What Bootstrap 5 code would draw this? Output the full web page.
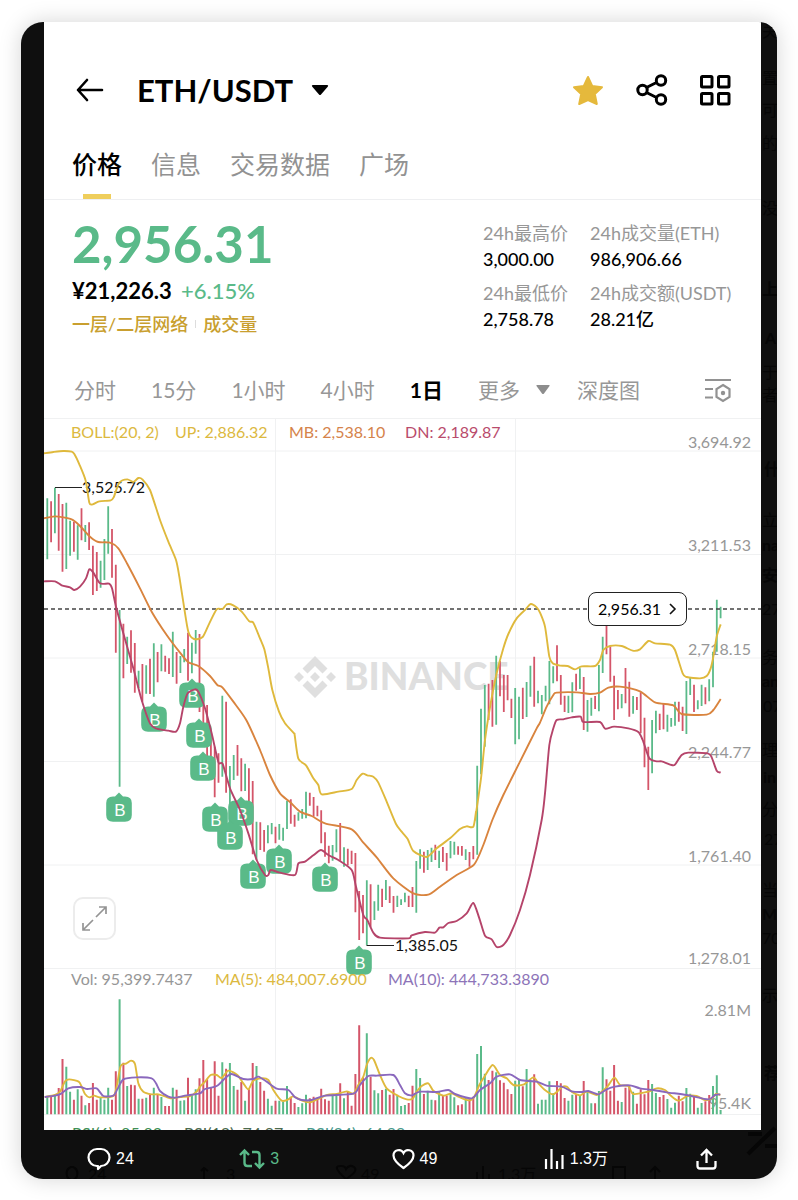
<!DOCTYPE html>
<html lang="zh-CN">
<head>
<meta charset="utf-8">
<meta name="viewport" content="width=device-width, initial-scale=1">
<title>ETH/USDT</title>
<link href="https://cdn.jsdelivr.net/npm/bootstrap@5.3.0/dist/css/bootstrap.min.css" rel="stylesheet">
<script src="https://cdn.jsdelivr.net/npm/bootstrap@5.3.0/dist/js/bootstrap.bundle.min.js"></script>
<style>
  :root { --up: #5aba89; --down: #ce5267; --gold: #c99f2f; --muted: #979797; --line: #eeeff1; }
  body { background: #fff; color: #000; font-family: Lato, "Noto Sans CJK SC", sans-serif; padding: 22px 21px 21px; }
  button { border: 0; background: none; padding: 0; color: inherit; font: inherit; }
  a { color: inherit; text-decoration: none; }
  svg { display: block; }
  .viewer { background: #0f0f0f; border-radius: 22px 18px 22px 22px; box-shadow: 0 0 22px rgba(0,0,0,.17); }
  .screen { background: #fff; margin: 0 16px 0 23px; }
  .top-bar { padding: 44px 30px 30px 31px; min-height: 122px; }
  .pair { font-size: 31px; line-height: 48px; font-weight: 700; margin-left: 32px; }
  .pair svg { margin-left: 18px; }
  .tools { gap: 31px; }
  .tabs { padding: 0 28px; gap: 29px; border-bottom: 1px solid var(--line); font-size: 25px; line-height: 40px; color: #929292; }
  .tabs a { padding-bottom: 15px; position: relative; }
  .tabs .on { color: #000; font-weight: 500; }
  .tabs .on::after { content: ""; position: absolute; bottom: 0; left: 11px; width: 28px; height: 5px; background: #efce5c; }
  .summary { padding: 14px 0 24px 28px; }
  .big { font-size: 51px; line-height: 60px; font-weight: 700; color: var(--up); }
  .fiat { font-size: 22px; line-height: 34px; font-weight: 700; }
  .fiat span { color: var(--up); font-weight: 500; }
  .tags { font-size: 18px; line-height: 32px; color: var(--gold); font-weight: 500; }
  .tags i { width: 1px; height: 8px; background: #ddd; margin: 0 7px; }
  .stats { display: grid; grid-template-columns: 107px 171px; align-content: start; row-gap: 8px; padding-top: 6px; margin: 0; font-size: 18px; line-height: 26px; }
  .stats dt { font-weight: 400; color: var(--muted); }
  .stats dd { margin: 0; font-weight: 500; }
  .spans { height: 54px; padding: 0 29px 2px 30px; gap: 27px; font-size: 21px; color: var(--muted); }
  .spans .on { color: #000; font-weight: 700; }
  .chart { position: relative; }
  .chart text { font-family: Lato, "Noto Sans CJK SC", sans-serif; }
  .chart .buy { font-family: "Liberation Sans", sans-serif; font-size: 17px; fill: #fff; text-anchor: middle; }
  .pill { position: absolute; right: 74px; top: 174px; width: 99px; height: 34px; border: 1px solid #222; border-radius: 8px; background: #fff; font-size: 16px; }
  .expand { position: absolute; left: 29px; top: 479px; width: 43px; height: 43px; border: 2px solid #ececec; border-radius: 10px; background: #fff; }
  .social { height: 49px; padding: 8px 60px 0 66px; color: #fff; font-size: 16px; font-family: "Liberation Sans", "Noto Sans CJK SC", sans-serif; }
  .social button { gap: 5px; }
  .rt { color: var(--up); }
  .ghost { position: absolute; inset: 0; width: 100%; height: 100%; pointer-events: none; }
</style>
</head>
<body>
<main class="viewer position-relative overflow-hidden">
  <svg class="ghost" viewBox="21 22 756 1157" preserveAspectRatio="xMaxYMin slice" aria-hidden="true" fill="#060606" font-size="16" font-family="Lato, 'Noto Sans CJK SC', sans-serif" id="ghost"></svg>
  <section class="screen position-relative">
    <header class="top-bar d-flex align-items-center">
      <button aria-label="返回"><svg width="30" height="24" fill="none" stroke="#000" stroke-width="2.6" stroke-linecap="round" stroke-linejoin="round"><path d="M12 2L3 12l9 10M3 12h24"/></svg></button>
      <button class="pair d-flex align-items-center">ETH/USDT <svg width="18" height="12"><path d="M2 1h14q2 0 .5 2L10 10.500q-1 1-2 0L1.500 3Q0 1 2 1z"/></svg></button>
      <div class="tools d-flex align-items-center ms-auto">
        <button aria-label="收藏"><svg width="34" height="34" viewBox="0 0 34 34" fill="#e5b93c" stroke="#e5b93c" stroke-width="2" stroke-linejoin="round"><path d="M17 4l4.200 9 9.800 1.200-7.200 6.800 2 10L17 27l-8.800 4 2-10L3 14.200 12.800 13z"/></svg></button>
        <button aria-label="分享"><svg width="32" height="32" viewBox="0 0 32 32" fill="none" stroke="#000" stroke-width="3"><circle cx="6.500" cy="16" r="4.700"/><circle cx="25" cy="6.500" r="4.700"/><circle cx="25" cy="25.500" r="4.700"/><path d="M10.500 13.500l10-5M10.500 18.500l10 5"/></svg></button>
        <button aria-label="更多功能"><svg width="32" height="32" viewBox="0 0 32 32" fill="none" stroke="#000" stroke-width="3"><rect x="2.500" y="2.500" width="10.500" height="10.500" rx="1"/><rect x="19.500" y="2.500" width="10.500" height="10.500" rx="1"/><rect x="2.500" y="19.500" width="10.500" height="10.500" rx="1"/><rect x="19.500" y="19.500" width="10.500" height="10.500" rx="1"/></svg></button>
      </div>
    </header>
    <nav class="tabs d-flex">
      <a href="#" class="on">价格</a><a href="#">信息</a><a href="#">交易数据</a><a href="#">广场</a>
    </nav>
    <div class="summary d-flex justify-content-between">
      <div>
        <div class="big">2,956.31</div>
        <div class="fiat">¥21,226.3 <span class="ms-1">+6.15%</span></div>
        <div class="tags d-flex align-items-center"><a href="#">一层/二层网络</a><i></i><a href="#">成交量</a></div>
      </div>
      <dl class="stats">
        <div><dt>24h最高价</dt><dd>3,000.00</dd></div>
        <div><dt>24h成交量(ETH)</dt><dd>986,906.66</dd></div>
        <div><dt>24h最低价</dt><dd>2,758.78</dd></div>
        <div><dt>24h成交额(USDT)</dt><dd>28.21亿</dd></div>
      </dl>
    </div>
    <div class="spans d-flex align-items-center">
      <button class="me-2">分时</button><button class="me-2">15分</button><button class="me-2">1小时</button><button class="me-2">4小时</button><button class="on me-2">1日</button>
      <button class="d-flex align-items-center">更多<svg class="ms-3" width="14" height="10" fill="#8d8d8d"><path d="M1 0h12q1 0 .5 1L8 8.500q-1 1-2 0L.5 1Q0 0 1 0z"/></svg></button>
      <button>深度图</button>
      <button class="ms-auto" aria-label="指标设置"><svg width="28" height="26" fill="none" stroke="#929292" stroke-width="2.200"><path d="M1 3h26M1 12h8M1 20.500h8M19 8l6.500 4v8L19 24l-6.500-4v-8z"/><circle cx="19" cy="16" r="2.200" fill="#929292" stroke="none"/></svg></button>
    </div>
    <div class="chart">
      <svg width="100%" viewBox="44 418 717 712" role="img" aria-label="ETH/USDT 日线图">
        <path d="M44 418.500H761M44 451H761M44 554.500H761M44 658H761M44 761.500H761M44 865H761M44 968.500H761M44 1114.500H761M275.500 418V1114M515.500 418V1114" stroke="#f0f1f2" fill="none"/>
        <g fill="#dfdfdf">
          <path d="M315 656l12.500 12.500-5 5-7.500-7.500-7.500 7.500-5-5zM315 698l12.500-12.500-5-5-7.500 7.500-7.500-7.500-5 5zM315 672l5 5-5 5-5-5zM299 672l5 5-5 5-5-5zM331 672l5 5-5 5-5-5z"/>
          <text x="344" y="690" font-size="37" font-weight="900">BINANCE</text>
        </g>
        <g font-size="16" fill="#979797" text-anchor="end">
          <text x="751" y="448">3,694.92</text><text x="751" y="551">3,211.53</text><text x="751" y="655">2,718.15</text><text x="751" y="758">2,244.77</text><text x="751" y="862">1,761.40</text><text x="751" y="964">1,278.01</text><text x="751" y="1016">2.81M</text><text x="751" y="1109">95.4K</text>
        </g>
        <g id="candles" fill="none" stroke-width="1.800"></g>
        <g id="vols" fill="none" stroke-width="2"></g>
        <path d="M55 487.500H82M366.500 945.500H394" stroke="#222" fill="none"/>
        <path d="M44 609H761" stroke="#444" stroke-width="1.300" stroke-dasharray="4 3" fill="none"/>
        <g font-size="16" fill="#111"><text x="82" y="493">3,525.72</text><text x="395" y="951">1,385.05</text></g>
        <g id="marks"></g>
        <g id="curves" fill="none" stroke-width="1.900" stroke-linejoin="round"></g>
        <g font-size="16">
          <text x="71" y="438" fill="#dcb93f">BOLL:(20, 2)</text><text x="175" y="438" fill="#dcb93f">UP: 2,886.32</text><text x="289" y="438" fill="#d5834b">MB: 2,538.10</text><text x="405" y="438" fill="#b94b6c">DN: 2,189.87</text>
          <text x="71" y="985" fill="#979797">Vol: 95,399.7437</text><text x="215" y="985" fill="#dcb93f">MA(5): 484,007.6900</text><text x="388" y="985" fill="#8d74b8">MA(10): 444,733.3890</text>
          <text x="72" y="1139" fill="#3f8f55">RSI(6): 85.82</text><text x="184" y="1139" fill="#4c6a4e">RSI(12): 74.97</text><text x="306" y="1139" fill="#4a9a8c">RSI(24): 64.99</text>
        </g>
      </svg>
      <button class="pill d-flex align-items-center justify-content-center">2,956.31<svg class="ms-2" width="8" height="12" fill="none" stroke="#111" stroke-width="1.600"><path d="M1 1l5 5-5 5"/></svg></button>
      <button class="expand d-flex align-items-center justify-content-center" aria-label="全屏"><svg width="27" height="27" fill="none" stroke="#949494" stroke-width="1.700"><path d="M15 12L25 2M18 2h7v7M12 15L2 25M2 18v7h7"/></svg></button>
    </div>
  </section>
  <footer class="social d-flex align-items-center position-relative">
    <div class="w-100"><button class="d-flex align-items-center"><svg width="24" height="24" fill="none" stroke="#fff" stroke-width="2.200" stroke-linejoin="round"><path d="M10 2h4a8.500 8.500 0 0 1 0 17l-3 3v-3h-1a8.500 8.500 0 0 1 0-17z"/></svg>24</button></div>
    <div class="w-100"><button class="rt d-flex align-items-center"><svg width="26" height="22" fill="none" stroke="currentColor" stroke-width="2.400"><path d="M1 7l4.500-4.500L10 7M5.500 3v12q0 3 3 3H13M25 15l-4.500 4.500L16 15M20.500 19V7q0-3-3-3H13"/></svg>3</button></div>
    <div class="w-100"><button class="d-flex align-items-center"><svg width="23" height="22" fill="none" stroke="#fff" stroke-width="2.200"><path d="M11.500 20C5 15.500 1.500 11.500 1.500 7.500A5.300 5.300 0 0 1 11.500 5a5.300 5.300 0 0 1 10 2.500c0 4-3.500 8-10 12.500z"/></svg>49</button></div>
    <div class="w-100"><button class="d-flex align-items-center"><svg width="21" height="22" fill="none" stroke="#fff" stroke-width="2.200"><path d="M2 11v10M7.500 1v20M13 13v8M18.500 7v14"/></svg>1.3万</button></div>
    <button aria-label="转发"><svg width="21" height="22" fill="none" stroke="#fff" stroke-width="2.300"><path d="M10.500 15V2M5 7.500L10.500 2 16 7.500M1.500 13v5q0 2.500 2.500 2.500h13q2.500 0 2.500-2.500v-5"/></svg></button>
  </footer>
</main>
<script>
  const UP = '#5aba89', DOWN = '#d45569';
  const X0 = 47.3, STEP = 3.804;
  const put = (id, html) => document.getElementById(id).insertAdjacentHTML('beforeend', html);

  // Daily high-low ranges, grouped by offset; three units make one chart pixel.
  const ranges = [
    [440, 'G175-358 R184-307 G143-280 R162-332 R192-395 G188-387 G242-347 R245-335 G256-359 R205-301 G255-306 R247-330 R317-465 R336-453 G362-443 G297-420 G199-341 R267-413 R374-638 G510-1040 R551-715 G590-672 R571-698 R609-758 G692-744 R672-785 G676-761 R656-762 G610-770 R636-727 G613-694 R647-695 R655-702 G575-711 R636-731 G648-699 G627-667 R578-722 G608-700 G570-641 R582-816'],
    [680, 'R66-130 R75-230 R150-230 R200-352 R220-308 G47-290 R65-338 G258-440 G225-300 R195-287 R235-334 G251-333 R265-370 R303-523 G425-540 R427-510 R450-515 G436-490 G429-463 R440-490 G432-479 G443-482 G362-447 R358-431 R404-440'],
    [760, 'G157-182 G147-176 G95-175 R98-137 R111-170 R137-169 R151-250 R217-290 R257-310 G255-302 G208-277 R189-302 G262-320 R266-316 R272-312 R279-457 R393-540 R405-520 G361-555 R373-500 G424-480 G374-452 R386-441 G360-420 R379-429 R408-458 G407-441 G418-435 G398-427 R407-441 R381-441 G303-458 G268-326 R275-338 G270-330 G263-306 R254-300 G272-324 R261-306 R279-332 G243-295 G245-284 R259-284 R258-287 G268-300 R276-320 R258-298 G17-284'],
    [560, 'G446-643 G375-560 R371-480 R360-500 G287-494 R303-409 R345-456 R345-421 R416-474 G384-553 G410-538 R383-477 G366-471 G317-410 R290-440 G392-430 G405-463 G377-424 G303-433 G319-370 R256-364 R345-434 R407-456 G407-459 G367-457 R341-392 G325-387 R351-510 G420-515 G413-467 R408-447 G315-454 G230-339 R190-283 R260-365 R347-480 R390-448 G402-445 R324-430 R365-470 G408-461 R411-450 R397-520 R473-622 R560-690 G480-640 G452-520 R461-510 R432-508 G464-515 G474-500 G425-497 R425-485 R440-513 G363-522 G352-405 R374-456 G421-448 G374-438 R382-433 G358-424 G275-382 G119-275 G140-175']
  ];
  let n = 0, up = '', down = '';
  for (const [base, list] of ranges) for (const item of list.split(' ')) {
    const [a, b] = item.slice(1).split('-');
    const d = `M${(X0 + STEP * n++).toFixed(1)} ${(base + a / 3).toFixed(1)}V${(base + b / 3).toFixed(1)}`;
    if (item[0] === 'G') up += d; else down += d;
  }
  put('candles', `<path d="${up}" stroke="${UP}"/><path d="${down}" stroke="${DOWN}"/>`);

  const volumes = 'G410 R408 G402 R384 R297 G320 G395 R419 G388 R407 G436 R429 R369 R419 G412 G419 G383 R419 R334 G118 R308 G378 R374 R376 G416 R416 G413 R404 G383 R404 G411 R438 R438 G383 R389 G422 G421 R353 G402 G388 R355 R300 R358 R384 R304 R407 G307 R326 G309 G378 R389 R366 G422 R388 R309 G318 R366 R392 G416 G437 R422 G422 G425 G378 R410 R429 G441 G430 G404 R415 R410 R413 R386 R418 R422 G402 G407 R370 G415 R393 R437 R342 R196 R352 G220 R350 G391 G400 R390 G386 R404 R387 G407 G438 G435 R429 R377 G327 G354 R402 G392 G419 R421 G394 R406 R407 G398 G412 R436 R433 G414 R414 R410 G282 G258 G341 R360 R332 G337 R361 R368 R388 R402 G362 G360 R379 G327 G360 R343 G431 G419 G419 G364 G400 R363 R370 R414 G422 G404 R404 G407 R363 G396 G430 R430 G393 G322 R358 R392 R315 R422 G426 R383 R376 G395 R431 R388 R403 R360 G372 G399 R411 R405 G417 G443 G428 R407 R424 G384 G401 R406 G443 G429 R424 R405 G378 G346 G450';
  up = down = '';
  volumes.split(' ').forEach((v, i) => {
    const d = `M${(X0 + STEP * i).toFixed(1)} 1114.300V${(960 + v.slice(1) / 3).toFixed(1)}`;
    if (v[0] === 'G') up += d; else down += d;
  });
  put('vols', `<path d="${up}" stroke="${UP}"/><path d="${down}" stroke="${DOWN}"/>`);

  // Buy markers, by the centre of the badge.
  [[119,809],[154,719],[192,695],[199,735],[203,768],[215,819],[241,813],[230,837],[253,876],[279,861],[325,879],[359,962]].forEach(([x, y]) =>
    put('marks', `<path transform="translate(${x} ${y})" d="M-6-12.500H-4L0-16.500 4-12.500H6Q12.800-12.500 12.800-6V6Q12.800 12.800 6 12.800H-6Q-12.800 12.800-12.800 6V-6Q-12.800-12.500-6-12.500z" fill="#5aba89"/><text class="buy" x="${x + 1}" y="${y + 7}">B</text>`));

  // Indicator curves: [colour, [originX, originY, points in thirds of a pixel] ...]
  const curves = [
    ['#dfb93c',
      [40,440,'12,40 40,36 70,33 95,35 103,42 118,73 137,122 148,188 158,193 178,184 212,181 221,172 238,128 262,118 280,126 295,114 307,118 330,150 360,240 385,305 408,360 418,410 432,500 445,575 462,597 488,591 508,550 530,508 548,507 560,493 580,496 605,515 628,544 640,548 660,595 673,628 685,685 697,750'],
      [40,680,'717,95 735,130 762,160'],
      [290,560,'14,525 25,596 48,616 70,655 85,675 95,703'],
      [270,760,'205,95 245,87 260,60 278,41 292,46 310,50 325,68 350,125 378,192 395,215 413,237 430,273 470,291 500,265 540,235 570,207 590,199 610,200 618,155'],
      [290,560,'555,780 573,655 585,540 602,430 620,340 640,265 655,222 680,175 707,148 722,132 740,142'],
      [540,560,'0,158 15,200 28,290 38,310 60,317 83,318 105,328 125,319 165,318 180,300 190,270 210,258 245,258 278,272 300,268 325,243 345,250 390,254 405,270 428,340 440,351 480,355 500,348 512,325 520,290 530,230 542,193']],
    ['#d9843e',
      [40,440,'12,235 45,229 95,238 120,258 150,290 175,306 210,308 235,325 262,372 300,445 335,515 380,585 420,638 445,667 475,678 510,708 532,735 547,742'],
      [40,680,'580,65 620,122 660,210 690,285 720,340 750,366'],
      [270,760,'90,155 125,168 165,190 245,208 280,248 320,292 370,355 430,400 475,404 510,380 560,345 612,314 640,255'],
      [290,560,'607,780 640,705 690,605 740,505'],
      [540,560,'0,488 20,440 40,405 50,398 110,397 150,402 180,398 205,383 240,380 300,394 345,427 400,436 425,462 500,464 520,450 542,417']],
    ['#b5446a',
      [40,440,'12,424 45,424 65,436 90,442 103,450 120,440 138,415 148,388 160,398 180,430 207,431 216,445 228,500 250,580 280,685'],
      [40,680,'305,60 330,130 350,146 385,152 408,155 420,130 430,80 443,40 465,28 475,35 495,85 515,160 535,246 548,252 570,325 600,390 625,460 650,540 675,585 685,585 692,570 720,578'],
      [270,760,'75,345 85,310 105,305 130,286 153,270 175,285 205,300 245,330 258,380 280,465 292,480 310,518 330,533 415,535 425,526 465,516 495,518 508,503 520,502 535,489 560,483 590,460 610,429 628,475 645,527 665,538 680,561 700,555 720,525 750,450 780,345'],
      [540,560,'5,780 15,700 28,555 40,505 50,480 70,478 95,472 122,470 130,486 180,486 195,506 222,500 265,505 295,516 308,540 328,595 350,604 365,604 395,615 405,614 425,585 445,578 503,580 515,592 530,632 542,638']],
    ['#dfb93c',
      [0,960,'134,411 165,405 180,395 195,364 208,358 236,365 245,380 255,402 268,412 283,407 300,412 340,408 350,380 362,318 378,311 393,302 405,312 415,370 430,395 455,403 475,403 500,411 515,415 540,411 570,408 590,395 600,380 615,365 632,345 650,345 665,354 685,332 712,345 730,370 745,388 760,362 785,355 805,360 820,390 845,422 865,418 880,409 905,421 930,427 960,414 985,404 1010,402 1040,394 1060,401 1075,375 1090,350 1100,315 1112,294 1122,300 1140,345 1160,385 1195,408'],
      [400,960,'20,418 38,416 50,395 65,378 85,370 100,392 130,407 155,400 175,410 205,421 222,412 238,375 255,347 278,315 300,345 320,355 340,375 370,374 400,352 415,370 435,390 460,403 485,382 500,380 515,395 540,406 560,395 590,405 605,395 622,380 643,353 660,375 685,378 700,402 745,395 770,385 795,390 810,405 835,422 862,408 890,408 915,420 935,415 948,402 961,405']],
    ['#8a68bd',
      [0,960,'134,411 165,407 185,400 205,385 240,381 262,387 290,385 310,408 340,407 352,388 370,358 410,352 455,355 468,370 480,393 505,410 525,413 560,406 600,400 615,387 650,378 675,355 695,342 730,357 760,357 775,350 800,365 830,386 865,390 885,412 905,420 935,420 975,407 1060,401 1080,375 1105,348 1130,347 1180,345'],
      [400,960,'0,375 15,400 35,406 60,395 110,396 145,390 165,402 215,415 240,390 270,370 290,350 330,343 360,360 410,365 440,377 485,380 515,394 545,396 565,393 595,403 620,388 645,380 690,376 720,385 760,390 800,397 860,405 925,418 945,405 961,403']]
  ];
  for (const [colour, ...parts] of curves) {
    const p = parts.flatMap(([ox, oy, s]) => s.split(' ').map(q => { const [x, y] = q.split(','); return [ox + x / 3, oy + y / 3]; }));
    let d = `M${p[0]}`;
    for (let i = 0; i < p.length - 1; i++) {
      const a = p[i - 1] || p[i], b = p[i], c = p[i + 1], e = p[i + 2] || c;
      d += `C${b[0] + (c[0] - a[0]) / 8} ${b[1] + (c[1] - a[1]) / 8} ${c[0] - (e[0] - b[0]) / 8} ${c[1] - (e[1] - b[1]) / 8} ${c}`;
    }
    put('curves', `<path d="${d}" stroke="${colour}"/>`);
  }

  // Dimmed page behind the viewer.
  [[762,37,'关'],[762,84,'置'],[762,116,'可'],[762,149,'的'],[762,214,'没'],[762,295,'上',1],[765,344,'A',1],[762,378,'于'],[762,401,'者'],[764,475,'什',1],[762,526,'立'],[762,551,'na',1],[762,581,'安',1],[762,615,'27'],[762,663,'务'],[762,687,'an',1],[763,712,'07'],[762,756,'理'],[763,783,'in',1],[762,815,'分'],[764,845,'27'],[762,896,'当'],[762,920,'MO',1],[762,944,'70'],[762,1001,'示'],[764,1079,'荐',1],[88,1180,'24'],[226,1180,'3'],[361,1180,'49'],[498,1180,'1.3万']].forEach(([x, y, t, bold]) => put('ghost', `<text x="${x}" y="${y}" font-weight="${bold ? 700 : 400}">${t}</text>`));
  put('ghost', '<path d="M748 1154l27-26M748 1134h14M765 1146h12" stroke="#060606" stroke-width="4"/><g fill="none" stroke="#060606" stroke-width="2"><path d="M71 1167h2a7 7 0 0 1 0 13h-2a7 7 0 0 1 0-13zM201 1171l3-3 4 3M204 1169v10M346 1179q-16-14-4-13 3 0 4 3 3-5 8-2 5 4-8 12M477 1172v8M483 1166v14M489 1174v6M613 1180v-13h12v13M655 1180v-12M650 1172l5-5 5 5"/></g>');
</script>
</body>
</html>
